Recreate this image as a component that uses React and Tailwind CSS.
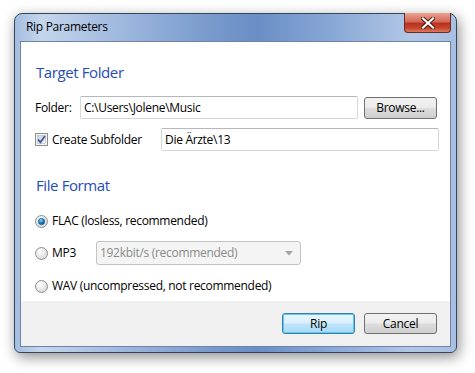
import React from "react";

const font = { fontFamily: '"Open Sans", "Noto Sans", sans-serif' };

function CheckBox() {
  return (
    <svg width="13" height="13" viewBox="0 0 13 13" className="shrink-0">
      <defs>
        <linearGradient id="cbg" x1="0" y1="0" x2="1" y2="1">
          <stop offset="0" stopColor="#cbcfd5" />
          <stop offset="1" stopColor="#f6f6f6" />
        </linearGradient>
      </defs>
      <rect x="0.5" y="0.5" width="12" height="12" fill="#f4f4f4" stroke="#8e8f8f" />
      <rect x="2.5" y="2.5" width="8" height="8" fill="url(#cbg)" stroke="#b8bcc2" strokeWidth="0.6" />
      <path d="M3 6.5 L5.4 9.2 L10 3" fill="none" stroke="#3d5a9e" strokeWidth="1.8" />
    </svg>
  );
}

function Radio({ checked }) {
  return (
    <svg width="13" height="13" viewBox="0 0 13 13" className="shrink-0">
      <defs>
        <radialGradient id="rbg" cx="0.4" cy="0.35" r="0.7">
          <stop offset="0" stopColor="#ffffff" />
          <stop offset="1" stopColor="#d4d6d9" />
        </radialGradient>
        <radialGradient id="rdot" cx="0.4" cy="0.3" r="0.7">
          <stop offset="0" stopColor="#8fd6f7" />
          <stop offset="0.5" stopColor="#1f8fcb" />
          <stop offset="1" stopColor="#0b4f86" />
        </radialGradient>
      </defs>
      <circle cx="6.5" cy="6.5" r="6" fill="url(#rbg)" stroke="#8e8f8f" />
      {checked && <circle cx="6.5" cy="6.5" r="3.2" fill="url(#rdot)" stroke="#1b4f7a" strokeWidth="0.5" />}
    </svg>
  );
}

function TextBox({ value, className }) {
  return (
    <div
      className={
        "h-[23px] border border-[#d3d7de] border-t-[#b5b8bf] rounded-[2px] bg-white flex items-center pl-[3px] text-[12px] text-black " +
        className
      }
    >
      {value}
    </div>
  );
}

export default function App() {
  return (
    <div className="w-[475px] h-[373px] bg-white pt-[13px] pl-[14px] overflow-hidden tracking-[-0.3px]" style={font}>
      <div className="w-[443px] h-[340px] rounded-t-[8px] rounded-b-[6px] border border-[#34465c] shadow-[2px_4px_14px_rgba(0,0,0,0.45)] bg-[linear-gradient(90deg,#a4bde0_0%,#c4d6ec_6%,#a2bbe0_22%,#7799cc_45%,#6a8ec6_55%,#88a8d6_72%,#b2c7e6_90%,#a6bfe2_100%)] flex flex-col px-[5px] pb-[5px]">
        {/* Title bar */}
        <div className="h-[27px] flex justify-between items-start shrink-0">
          <div className="pl-[6px] pt-[4px] text-[12px] text-black leading-[18px]">Rip Parameters</div>
          <div className="-mt-[1px] w-[47px] h-[20px] rounded-b-[4px] border border-[#6b2b24] border-t-0 bg-[linear-gradient(180deg,#e8a394_0%,#d46a57_45%,#b8321d_55%,#c5462e_80%,#e07a5c_100%)] flex items-center justify-center">
            <svg width="14" height="12" viewBox="0 0 14 12">
              <path d="M2 1.5 L12 10.5 M12 1.5 L2 10.5" stroke="#4a1610" strokeWidth="4" strokeLinecap="square" />
              <path d="M2 1.5 L12 10.5 M12 1.5 L2 10.5" stroke="#ffffff" strokeWidth="2.2" strokeLinecap="square" />
            </svg>
          </div>
        </div>

        {/* Client area */}
        <div className="flex-1 border border-[#6f84a3] bg-white flex flex-col">
          <div className="flex-1 flex flex-col pl-[14px] pt-[20px]">
            <div className="text-[15px] leading-[20px] text-[#1f4db5] pl-[1px] tracking-[-0.4px]">Target Folder</div>

            <div className="mt-[14px] flex items-center">
              <div className="w-[45px] text-[12px] text-black">Folder:</div>
              <TextBox value="C:\Users\Jolene\Music" className="w-[278px]" />
              <button className="ml-[6px] w-[73px] h-[22px] border border-[#707070] rounded-[3px] bg-[linear-gradient(180deg,#f2f2f2_0%,#ebebeb_48%,#dddddd_52%,#cfcfcf_100%)] text-[12px] text-black leading-none" style={font}>
                Browse...
              </button>
            </div>

            <div className="mt-[9px] flex items-center">
              <CheckBox />
              <div className="ml-[4px] w-[109px] text-[12px] text-black">Create Subfolder</div>
              <TextBox value="Die Ärzte\13" className="w-[278px]" />
            </div>

            <div className="mt-[24px] text-[15px] leading-[20px] text-[#1f4db5] pl-[1px] tracking-[-0.4px]">File Format</div>

            <div className="mt-[18px] h-[16px] flex items-center">
              <Radio checked />
              <div className="ml-[4px] text-[12px] text-black">FLAC (losless, recommended)</div>
            </div>

            <div className="mt-[12px] flex items-center">
              <Radio />
              <div className="ml-[4px] w-[44px] text-[12px] text-black">MP3</div>
              <div className="w-[205px] h-[24px] border border-[#c3c3c3] rounded-[3px] bg-[#f4f4f4] flex items-center justify-between pl-[3px] pr-[7px] text-[12px] text-[#8a8a8a]">
                <span>192kbit/s (recommended)</span>
                <svg width="8" height="5" viewBox="0 0 8 5">
                  <path d="M0 0 L8 0 L4 4.5 Z" fill="#a5a5a5" />
                </svg>
              </div>
            </div>

            <div className="mt-[13px] h-[16px] flex items-center">
              <Radio />
              <div className="ml-[4px] text-[12px] text-black">WAV (uncompressed, not recommended)</div>
            </div>
          </div>

          {/* Footer */}
          <div className="h-[45px] shrink-0 bg-[#f0f0f0] flex justify-end items-start pt-[12px] pr-[13px] gap-[9px]">
            <button className="w-[73px] h-[21px] border border-[#3c7fb1] rounded-[3px] shadow-[inset_0_0_0_1px_#5ec8f5] bg-[linear-gradient(180deg,#eaf6fd_0%,#d9f0fc_48%,#bee6fd_52%,#a7d9f5_100%)] text-[12px] text-black leading-none" style={font}>
              Rip
            </button>
            <button className="w-[73px] h-[21px] border border-[#707070] rounded-[3px] bg-[linear-gradient(180deg,#f2f2f2_0%,#ebebeb_48%,#dddddd_52%,#cfcfcf_100%)] text-[12px] text-black leading-none" style={font}>
              Cancel
            </button>
          </div>
        </div>
      </div>
    </div>
  );
}
